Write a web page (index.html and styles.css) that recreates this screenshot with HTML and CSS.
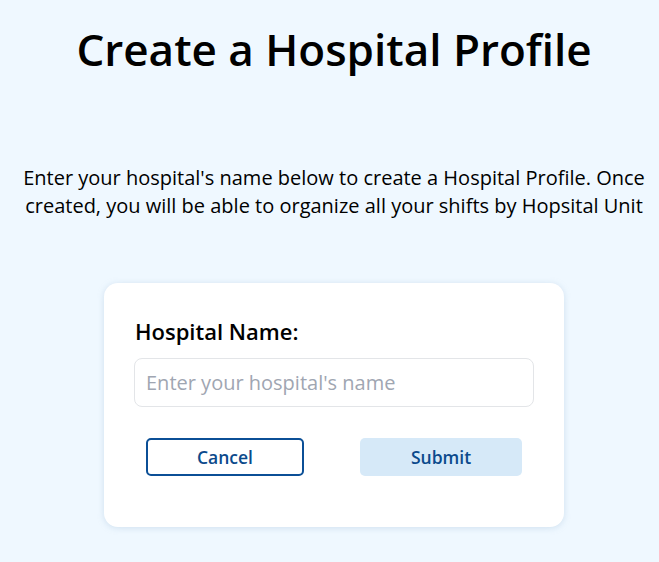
FILE: index.html
```html
<!DOCTYPE html>
<html>
<head>
<meta charset="utf-8">
<link rel="stylesheet" href="styles.css">
</head>
<body>
<main class="page">
  <h1 class="title">Create a Hospital Profile</h1>
  <p class="intro">Enter your hospital's name below to create a Hospital Profile. Once<br>created, you will be able to organize all your shifts by Hopsital Unit</p>
  <form class="card">
    <label class="label" for="hname">Hospital Name:</label>
    <input class="input" id="hname" type="text" placeholder="Enter your hospital's name">
    <div class="actions">
      <button type="button" class="btn btn-cancel">Cancel</button>
      <button type="button" class="btn btn-submit">Submit</button>
    </div>
  </form>
</main>
</body>
</html>
```

FILE: styles.css
```css
* { box-sizing: border-box; }
html, body { margin: 0; padding: 0; }
body {
  background: #eff8ff;
  font-family: "Open Sans", "Noto Sans", sans-serif;
  color: #000;
  width: 659px;
  height: 562px;
  overflow: hidden;
}
.page {
  display: flex;
  flex-direction: column;
  align-items: center;
  padding-left: 9px;
}
.title {
  margin: 20px 0 0;
  font-size: 44px;
  font-weight: 600;
  line-height: 58px;
}
.intro {
  margin: 86px 0 0;
  font-size: 20px;
  line-height: 28px;
  text-align: center;
  padding: 0;
  white-space: nowrap;
}
.card {
  margin-top: 63px;
  width: 460px;
  background: #fff;
  border-radius: 14px;
  box-shadow: 0 1px 6px rgba(150, 180, 210, 0.35);
  padding: 34px 30px 51px 30px;
  display: flex;
  flex-direction: column;
}
.label {
  font-size: 22px;
  font-weight: 600;
  line-height: 28px;
  margin-left: 1px;
}
.input {
  margin-top: 13px;
  height: 49px;
  width: 400px;
  border: 1px solid #e3e5e8;
  border-radius: 8px;
  padding: 0 11px;
  font-family: inherit;
  font-size: 20px;
  color: #111;
  outline: none;
}
.input::placeholder { color: #9fa6b2; }
.actions {
  margin-top: 31px;
  display: flex;
  justify-content: space-between;
  padding: 0 12px;
}
.btn {
  height: 38px;
  font-family: inherit;
  font-size: 17.5px;
  font-weight: 600;
  color: #0b4a8c;
  border-radius: 5px;
  cursor: pointer;
}
.btn-cancel {
  width: 158px;
  background: #fff;
  border: 2px solid #0b4f96;
}
.btn-submit {
  width: 162px;
  background: #d6e9f8;
  border: none;
}
```
